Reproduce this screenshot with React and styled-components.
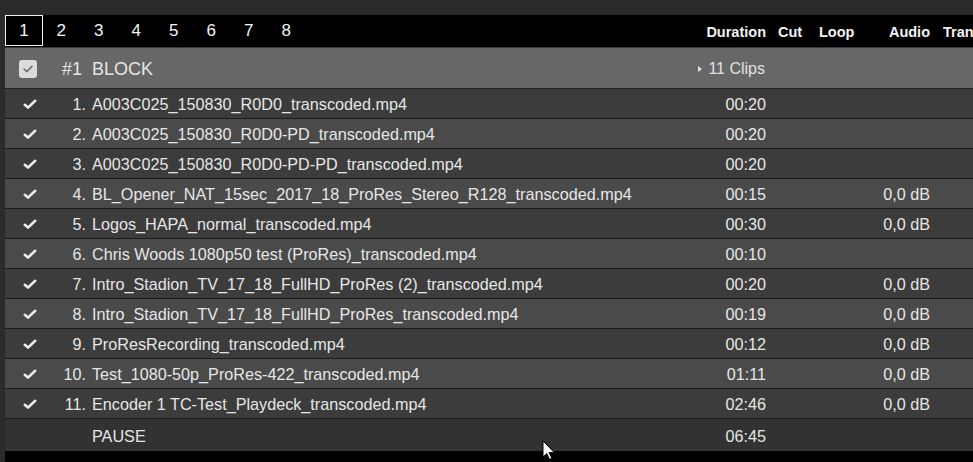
import React from 'react';
import styled, { createGlobalStyle } from 'styled-components';

const Global = createGlobalStyle`
  html, body { margin: 0; padding: 0; background: #2b2b2b; overflow: hidden; }
  body { font-family: "Liberation Sans", Arial, sans-serif; }
`;

const COLS = '45px 36px 614px 66px 40px 60px 64px 1fr';

const Page = styled.div`
  position: relative;
  width: 973px;
  height: 462px;
  overflow: hidden;
  background: #2b2b2b;
  padding: 15px 0 0 5px;
  box-sizing: border-box;
`;

const Panel = styled.div`
  width: 1100px;
  height: 447px;
  background: #000;
  display: flex;
  flex-direction: column;
`;

const TabBar = styled.div`
  display: grid;
  grid-template-columns: 695px 66px 40px 60px 64px 1fr;
  height: 32px;
  align-items: center;
  background: #000;
  border-bottom: 1px solid #383838;
`;

const Tabs = styled.div`
  display: flex;
  height: 32px;
  align-items: flex-start;
`;

const Tab = styled.div`
  height: 31px;
  box-sizing: border-box;
  display: flex;
  align-items: center;
  justify-content: center;
  color: #f4f4f4;
  font-size: 17px;
  border: 1px solid ${p => (p.$active ? '#f0f0f0' : 'transparent')};
  width: ${p => (p.$active ? '38px' : '37.5px')};
  margin-right: ${p => (p.$active ? '-0.5px' : '0')};
`;

const ColLabel = styled.div`
  color: #f2f2f2;
  font-weight: bold;
  font-size: 14.5px;
  white-space: nowrap;
  text-align: ${p => p.$align || 'left'};
  padding-left: ${p => p.$pl || 0}px;
  padding-top: 1px;
`;

const BlockHeader = styled.div`
  display: grid;
  grid-template-columns: ${COLS};
  grid-template-rows: 40px;
  height: 40px;
  align-items: center;
  background: #676767;
  border-bottom: 1px solid #202020;
  color: #e4e4e4;
  font-size: 18px;
`;

const CheckBox = styled.div`
  grid-column: 1;
  grid-row: 1;
  margin-left: 14px;
  margin-top: 1px;
  width: 18px;
  height: 18px;
  border-radius: 3px;
  background: #dcdcdc;
  display: flex;
  align-items: center;
  justify-content: center;
`;

const BlockNum = styled.div`
  grid-column: 2;
  grid-row: 1;
  text-align: right;
  padding-right: 4px;
  padding-top: 2px;
`;

const BlockTitle = styled.div`
  grid-column: 3;
  grid-row: 1;
  padding-left: 6px;
  padding-top: 2px;
`;

const ClipCount = styled.div`
  grid-column: 3 / 5;
  grid-row: 1;
  justify-self: end;
  display: flex;
  align-items: center;
  gap: 6px;
  font-size: 16px;
  color: #e2e2e2;
  margin-right: 1px;
  padding-top: 2px;
`;

const Tri = styled.span`
  width: 0;
  height: 0;
  border-top: 3px solid transparent;
  border-bottom: 3px solid transparent;
  border-left: 4px solid #e0e0e0;
`;

const Row = styled.div`
  display: grid;
  grid-template-columns: ${COLS};
  box-sizing: border-box;
  height: ${p => (p.$pause ? 32 : 30)}px;
  padding-top: 2px;
  align-items: center;
  background: ${p => (p.$pause ? '#323232' : p.$alt ? '#4a4a4a' : '#3c3c3c')};
  border-bottom: ${p => (p.$pause ? 'none' : '1px solid #1c1c1c')};
  color: #e6e6e6;
  font-size: 16.2px;
  white-space: nowrap;
`;

const CheckCell = styled.div`
  padding-left: 18px;
  display: flex;
  align-items: center;
`;

const NumCell = styled.div`
  text-align: right;
`;

const NameCell = styled.div`
  padding-left: 6px;
  overflow: hidden;
`;

const RightCell = styled.div`
  text-align: right;
`;

const Cursor = styled.svg`
  position: absolute;
  left: 542px;
  top: 440px;
`;

const clips = [
  ['A003C025_150830_R0D0_transcoded.mp4', '00:20', ''],
  ['A003C025_150830_R0D0-PD_transcoded.mp4', '00:20', ''],
  ['A003C025_150830_R0D0-PD-PD_transcoded.mp4', '00:20', ''],
  ['BL_Opener_NAT_15sec_2017_18_ProRes_Stereo_R128_transcoded.mp4', '00:15', '0,0 dB'],
  ['Logos_HAPA_normal_transcoded.mp4', '00:30', '0,0 dB'],
  ['Chris Woods 1080p50 test (ProRes)_transcoded.mp4', '00:10', ''],
  ['Intro_Stadion_TV_17_18_FullHD_ProRes (2)_transcoded.mp4', '00:20', '0,0 dB'],
  ['Intro_Stadion_TV_17_18_FullHD_ProRes_transcoded.mp4', '00:19', '0,0 dB'],
  ['ProResRecording_transcoded.mp4', '00:12', '0,0 dB'],
  ['Test_1080-50p_ProRes-422_transcoded.mp4', '01:11', '0,0 dB'],
  ['Encoder 1 TC-Test_Playdeck_transcoded.mp4', '02:46', '0,0 dB'],
];

const Check = () => (
  <svg width="14" height="11" viewBox="0 0 14 11">
    <path d="M1.8 5.8 L5 8.6 L12.2 1.8" fill="none" stroke="#ececec" strokeWidth="2.6" strokeLinecap="round" strokeLinejoin="round" />
  </svg>
);

export default function App() {
  return (
    <>
      <Global />
      <Page>
        <Panel>
          <TabBar>
            <Tabs>
              {[1, 2, 3, 4, 5, 6, 7, 8].map(n => (
                <Tab key={n} $active={n === 1}>{n}</Tab>
              ))}
            </Tabs>
            <ColLabel $align="right">Duration</ColLabel>
            <ColLabel $pl={12}>Cut</ColLabel>
            <ColLabel $pl={13}>Loop</ColLabel>
            <ColLabel $align="right">Audio</ColLabel>
            <ColLabel $pl={13}>Transition</ColLabel>
          </TabBar>
          <BlockHeader>
            <CheckBox>
              <svg width="12" height="10" viewBox="0 0 12 10">
                <path d="M2 5 L4.8 7.6 L10 2.4" fill="none" stroke="#727272" strokeWidth="1.6" strokeLinecap="round" strokeLinejoin="round" />
              </svg>
            </CheckBox>
            <BlockNum>#1</BlockNum>
            <BlockTitle>BLOCK</BlockTitle>
            <ClipCount>
              <Tri />
              11 Clips
            </ClipCount>
          </BlockHeader>
          {clips.map(([name, dur, audio], i) => (
            <Row key={i} $alt={i % 2 === 1}>
              <CheckCell><Check /></CheckCell>
              <NumCell>{i + 1}.</NumCell>
              <NameCell>{name}</NameCell>
              <RightCell>{dur}</RightCell>
              <div />
              <div />
              <RightCell>{audio}</RightCell>
              <div />
            </Row>
          ))}
          <Row $pause>
            <div />
            <div />
            <NameCell>PAUSE</NameCell>
            <RightCell>06:45</RightCell>
            <div />
            <div />
            <div />
            <div />
          </Row>
        </Panel>
        <Cursor width="14" height="21" viewBox="0 0 14 21">
          <path d="M1 1 L1 17 L4.8 13.4 L7.4 19.4 L9.8 18.4 L7.2 12.6 L12.4 12.6 Z" fill="#fff" stroke="#000" strokeWidth="1" strokeLinejoin="round" />
        </Cursor>
      </Page>
    </>
  );
}
